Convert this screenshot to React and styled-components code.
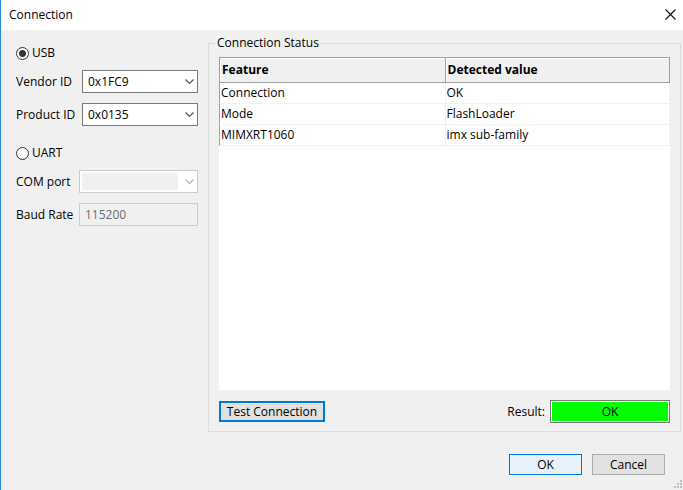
import React, { useState } from "react";
import styled, { createGlobalStyle } from "styled-components";

const GlobalStyle = createGlobalStyle`
  *, *::before, *::after { box-sizing: border-box; }
  body { margin: 0; background: #f0f0f0; }
  body, button, input, select {
    font-family: "Open Sans", "Segoe UI", sans-serif;
    font-size: 12px;
    line-height: 16px;
    color: #000;
  }
`;

const Dialog = styled.form`
  display: flex;
  flex-direction: column;
  min-height: 100vh;
  background: #f0f0f0;
  border-left: 1px solid #1f87dc;
`;

const TitleBar = styled.header`
  display: flex;
  align-items: center;
  justify-content: space-between;
  height: 30px;
  padding: 0 7px 0 8px;
  background: #fff;
`;

const Title = styled.h1`
  margin: 0;
  font-size: 12px;
  font-weight: 400;
`;

const CloseButton = styled.button`
  display: flex;
  padding: 0 0 2px;
  border: 0;
  background: none;
`;

const Body = styled.main`
  flex: 1;
  display: flex;
  padding: 4px 2px 0 15px;
  gap: 10px;
`;

const Settings = styled.section`
  flex: none;
  width: 182px;
  padding-top: 11px;
`;

const RadioLabel = styled.label`
  display: flex;
  align-items: center;
  gap: 3px;
  height: 16px;
`;

const Radio = styled.input`
  appearance: none;
  width: 13px;
  height: 13px;
  margin: 0;
  border: 1px solid #333;
  border-radius: 50%;
  background: #fff;

  &:checked {
    background: radial-gradient(circle, #333 0 3px, #fff 4px);
  }
`;

const FieldGrid = styled.div`
  display: grid;
  grid-template-columns: ${(p) => p.$labelWidth} 1fr;
  row-gap: 10px;
  align-items: center;
  margin: 9px 0 19px;
`;

const FieldLabel = styled.label`
  text-align: ${(p) => p.$align || "left"};
  padding-right: 10px;
  white-space: nowrap;
`;

const SelectWrap = styled.div`
  position: relative;
  height: 23px;
`;

const Select = styled.select`
  appearance: none;
  display: block;
  width: 100%;
  height: 23px;
  padding: 0 20px 0 5px;
  border: 1px solid #7a7a7a;
  border-radius: 0;
  background: #fff;

  &:disabled {
    opacity: 1;
    border-color: #ccc;
    background: linear-gradient(#f0f0f0, #f0f0f0) 2px 2px / calc(100% - 21px) calc(100% - 4px) no-repeat #fff;
  }
`;

const Chevron = styled.svg`
  position: absolute;
  right: 4px;
  top: 9px;
  width: 9px;
  height: 6px;
  pointer-events: none;
  fill: none;
  stroke: ${(p) => (p.$muted ? "#b4b4b4" : "#555")};
`;

const TextInput = styled.input`
  width: 100%;
  height: 23px;
  padding: 0 5px;
  border: 1px solid #ccc;
  background: #f0f0f0;

  &:disabled { color: #6d6d6d; }
`;

const StatusGroup = styled.fieldset`
  flex: 1;
  display: flex;
  flex-direction: column;
  min-width: 0;
  margin: 0;
  padding: 5px 10px 8px;
  border: 1px solid #dcdcdc;
`;

const Legend = styled.legend`
  height: 18px;
  margin-left: -4px;
  padding: 0 2px;
  line-height: 18px;
`;

const TableArea = styled.div`
  flex: 1;
  background: #fff;
`;

const Table = styled.table`
  width: 100%;
  table-layout: fixed;
  border-collapse: separate;
  border-spacing: 0;
`;

const HeadCell = styled.th`
  height: 26px;
  padding: 0 2px;
  text-align: left;
  font-weight: 700;
  background: #f0f0f0;
  box-shadow: inset 1px 1px #fff;
  border: 1px solid #a0a0a0;
  border-right-width: 0;

  &:last-child { border-right-width: 1px; }
`;

const Cell = styled.td`
  height: 21px;
  padding: 0 1px;
  border-bottom: 1px solid #f0f0f0;
  border-left: 1px solid #f0f0f0;

  &:first-child { border-left-color: #a0a0a0; }
  &:last-child { border-right: 1px solid #f0f0f0; }
`;

const StatusFooter = styled.div`
  display: flex;
  align-items: center;
  margin-top: 10px;
`;

const Button = styled.button`
  width: ${(p) => p.$width || "73px"};
  height: 21px;
  padding: 0;
  border: ${(p) => (p.$focused ? "2px solid #0078d7" : p.$primary ? "1px solid #0078d7" : "1px solid #adadad")};
  background: ${(p) => (p.$primary ? "#e5f1fb" : "#e1e1e1")};
`;

const ResultLabel = styled.label`
  margin-left: auto;
  padding-right: 5px;
`;

const ResultField = styled.input`
  width: 120px;
  height: 23px;
  padding: 0;
  text-align: center;
  border: 1px solid #7a7a7a;
  outline: 1px solid #fff;
  outline-offset: -2px;
  background: #0f0;
`;

const DialogFooter = styled.footer`
  display: flex;
  justify-content: flex-end;
  gap: 10px;
  padding: 22px 18px 5px;
`;

const GripRow = styled.div`
  display: flex;
  justify-content: flex-end;
  height: 10px;
  padding-right: 1px;
`;

const rows = [
  ["Connection", "OK"],
  ["Mode", "FlashLoader"],
  ["MIMXRT1060", "imx sub-family"],
];

function Combo({ id, value, disabled }) {
  return (
    <SelectWrap>
      <Select id={id} defaultValue={value} disabled={disabled}>
        <option value={value}>{value}</option>
      </Select>
      <Chevron viewBox="0 0 9 6" $muted={disabled} aria-hidden="true">
        <path d="M0.5 0.5 4.5 4.5 8.5 0.5" strokeWidth="1.2" />
      </Chevron>
    </SelectWrap>
  );
}

export default function App() {
  const [port, setPort] = useState("usb");
  return (
    <>
      <GlobalStyle />
      <Dialog onSubmit={(e) => e.preventDefault()}>
        <TitleBar>
          <Title>Connection</Title>
          <CloseButton type="button" aria-label="Close">
            <svg width="11" height="11" viewBox="0 0 11 11" fill="none" stroke="#111" strokeWidth="1.1">
              <path d="M0.5 0.5 10.5 10.5M10.5 0.5 0.5 10.5" />
            </svg>
          </CloseButton>
        </TitleBar>
        <Body>
          <Settings>
            <RadioLabel>
              <Radio type="radio" name="port" checked={port === "usb"} onChange={() => setPort("usb")} />
              USB
            </RadioLabel>
            <FieldGrid $labelWidth="66px">
              <FieldLabel htmlFor="vendor" $align="right">Vendor ID</FieldLabel>
              <Combo id="vendor" value="0x1FC9" />
              <FieldLabel htmlFor="product" $align="right">Product ID</FieldLabel>
              <Combo id="product" value="0x0135" />
            </FieldGrid>
            <RadioLabel>
              <Radio type="radio" name="port" checked={port === "uart"} onChange={() => setPort("uart")} />
              UART
            </RadioLabel>
            <FieldGrid $labelWidth="63px">
              <FieldLabel htmlFor="com">COM port</FieldLabel>
              <Combo id="com" value="" disabled={port === "usb"} />
              <FieldLabel htmlFor="baud">Baud Rate</FieldLabel>
              <TextInput id="baud" defaultValue="115200" disabled={port === "usb"} />
            </FieldGrid>
          </Settings>
          <StatusGroup>
            <Legend>Connection Status</Legend>
            <TableArea>
              <Table>
                <thead>
                  <tr>
                    <HeadCell scope="col">Feature</HeadCell>
                    <HeadCell scope="col">Detected value</HeadCell>
                  </tr>
                </thead>
                <tbody>
                  {rows.map(([feature, value]) => (
                    <tr key={feature}>
                      <Cell>{feature}</Cell>
                      <Cell>{value}</Cell>
                    </tr>
                  ))}
                </tbody>
              </Table>
            </TableArea>
            <StatusFooter>
              <Button type="button" $width="106px" $focused>Test Connection</Button>
              <ResultLabel htmlFor="result">Result:</ResultLabel>
              <ResultField id="result" value="OK" readOnly />
            </StatusFooter>
          </StatusGroup>
        </Body>
        <DialogFooter>
          <Button type="submit" $primary>OK</Button>
          <Button type="button">Cancel</Button>
        </DialogFooter>
        <GripRow>
          <svg width="8" height="8" viewBox="0 0 8 8" fill="#bfbfbf" aria-hidden="true">
            <path d="M6 0h2v2h-2zM3 3h2v2h-2zM6 3h2v2h-2zM0 6h2v2h-2zM3 6h2v2h-2zM6 6h2v2h-2z" />
          </svg>
        </GripRow>
      </Dialog>
    </>
  );
}
